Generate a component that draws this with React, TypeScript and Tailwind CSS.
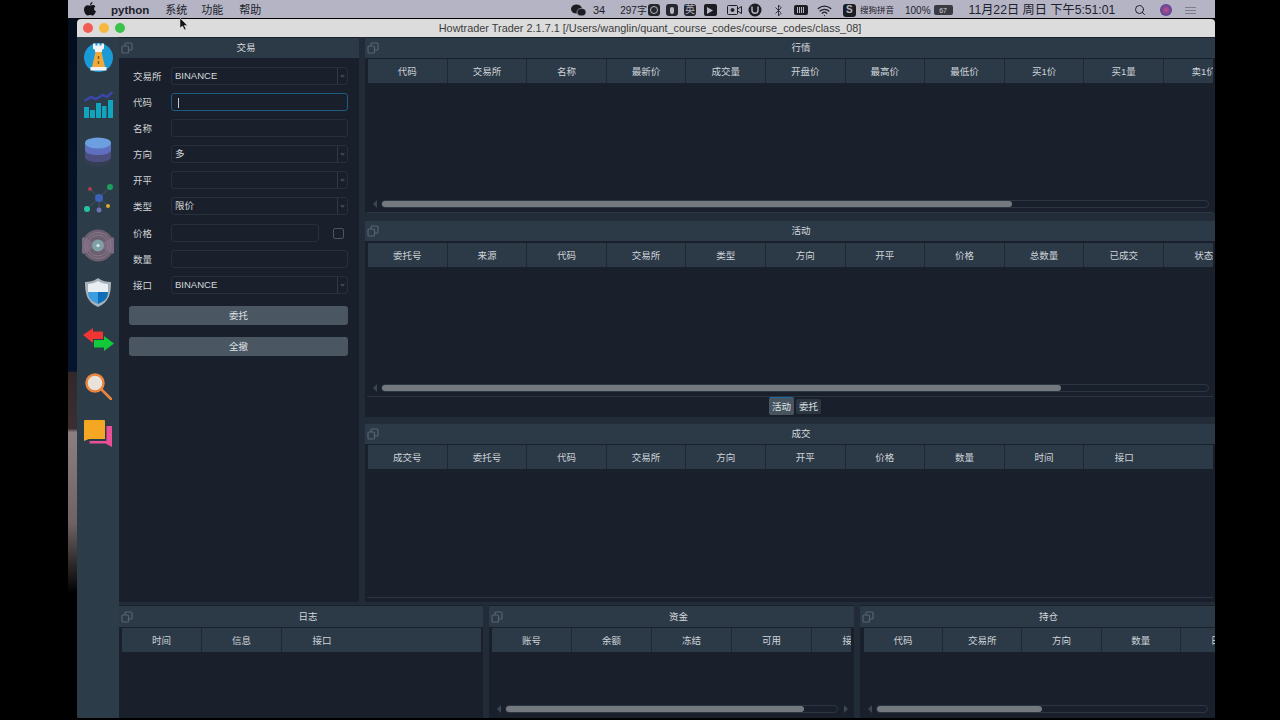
import { Search, Wifi, Bluetooth } from "lucide-react"

const font = "font-['Liberation_Sans','Noto_Sans_CJK_SC',sans-serif]"

const marketCols = ["代码", "交易所", "名称", "最新价", "成交量", "开盘价", "最高价", "最低价", "买1价", "买1量", "卖1价"]
const activeCols = ["委托号", "来源", "代码", "交易所", "类型", "方向", "开平", "价格", "总数量", "已成交", "状态"]
const tradeCols = ["成交号", "委托号", "代码", "交易所", "方向", "开平", "价格", "数量", "时间", "接口"]

function FloatIcon() {
  return (
    <svg width="12" height="12" viewBox="0 0 12 12" fill="none" stroke="#56626e" strokeWidth="1.2" className="shrink-0">
      <rect x="4" y="1" width="7" height="7" rx="1" />
      <rect x="1" y="4" width="6.5" height="7" rx="1" fill="#2c3a48" />
    </svg>
  )
}

function TitleBar({ title, h = "h-[20px]", offset = "" }: { title: string; h?: string; offset?: string }) {
  return (
    <div className={`${h} bg-[#2c3a48] flex items-center relative shrink-0`}>
      <div className="pl-[2px] flex items-center"><FloatIcon /></div>
      <div className={`flex-1 text-center text-[9.5px] text-[#d5d9dd] ${offset}`}>{title}</div>
    </div>
  )
}

function HeaderRow({ cols, w = 79.6 }: { cols: string[]; w?: number }) {
  return (
    <div className="h-[24px] bg-[#2c3a48] flex shrink-0 overflow-hidden">
      {cols.map((c) => (
        <div
          key={c}
          style={{ width: w, minWidth: w }}
          className="h-full pt-[2px] flex items-center justify-center text-[9.5px] text-[#cfd4d9] border-r border-[#1e2833] last:border-r-0 whitespace-nowrap"
        >
          {c}
        </div>
      ))}
    </div>
  )
}

function Scrollbar({ thumb, track, arrow = false }: { thumb: number; track: number; arrow?: boolean }) {
  return (
    <div className="h-[12px] flex items-center shrink-0 pl-[5px]">
      <svg width="6" height="8" viewBox="0 0 6 8" className="shrink-0"><path d="M5 0 L1 4 L5 8 Z" fill="#3a4653" /></svg>
      <div style={{ width: track }} className="ml-[3px] h-[8px] rounded-[4px] border border-[#2b3642] shrink-0">
        <div style={{ width: thumb }} className="h-full rounded-[4px] bg-[#74787f]" />
      </div>
      {arrow && <svg width="6" height="8" viewBox="0 0 6 8" className="ml-[5px] shrink-0"><path d="M1 0 L5 4 L1 8 Z" fill="#3a4653" /></svg>}
    </div>
  )
}

function TablePanel({ title, cols, thumb, track, height = "h-[175px]", gap = "mt-[1px]" }: { title: string; cols: string[]; thumb?: number; track?: number; height?: string; gap?: string }) {
  return (
    <div className={`${height} flex flex-col shrink-0`}>
      <TitleBar title={title} offset="pl-[8px]" />
      <div className={`flex-1 flex flex-col ${gap} mx-[2px] border-b border-[#2b3642] overflow-hidden`}>
        <div className="pl-[1px]"><HeaderRow cols={cols} /></div>
        <div className="flex-1" />
        {thumb && track && <div className="pb-[2px]"><Scrollbar thumb={thumb} track={track} /></div>}
      </div>
    </div>
  )
}

function Box({ children, combo = false, w = "w-[177px]", focus = false }: { children?: React.ReactNode; combo?: boolean; w?: string; focus?: boolean }) {
  return (
    <div className={`${w} h-[18px] rounded-[3px] border ${focus ? "border-[#1f5a80]" : "border-[#262f3a]"} bg-[#19202b] flex items-center text-[9.5px] text-[#d5d9dd] pl-[3px] relative`}>
      <span className="flex-1 pt-[1px]">{children}</span>
      {combo && (
        <div className="w-[10px] h-full border-l border-[#2f3a46] flex items-center justify-center">
          <svg width="5" height="3" viewBox="0 0 5 3"><path d="M0 0 L5 0 L2.5 3 Z" fill="#3d4955" /></svg>
        </div>
      )}
    </div>
  )
}

function FormRow({ label, children, h = "h-[26px]" }: { label: string; children: React.ReactNode; h?: string }) {
  return (
    <div className={`${h} flex items-center`}>
      <div className="w-[38px] pt-[2px] text-[9.5px] text-[#d0d4d8] whitespace-nowrap">{label}</div>
      {children}
    </div>
  )
}

function ActionButton({ label }: { label: string }) {
  return (
    <button className="h-[19px] w-[219px] pt-[1px] rounded-[3px] bg-[#4a5763] text-[9.5px] text-[#dfe3e6] flex items-center justify-center">
      {label}
    </button>
  )
}

function SideIcons() {
  return (
    <div className="w-[42px] shrink-0 bg-[#2d3c49] flex flex-col items-center pt-[6px] rounded-bl-[4px]">
      <svg width="29" height="29" viewBox="0 0 29 29" className="mb-[19px] shrink-0">
        <circle cx="14.5" cy="14.5" r="14.5" fill="#1a9ad6" />
        <path d="M9 0.5 h2.5 v2 h2 v-2 h2 v2 h2 v-2 h2.5 v5 l-2 1.5 v2 h-7 v-2 l-2 -1.5 Z" fill="#f3f4f6" />
        <path d="M11.5 9 h6 l3.5 15 h-13 Z" fill="#f2a93a" />
        <path d="M13.8 13 h1.4 v3 h-1.4 Z M13.8 18 h1.4 v3 h-1.4 Z" fill="#7a5a1a" />
        <rect x="6.5" y="24" width="16" height="3.5" fill="#f3f4f6" />
      </svg>
      <svg width="29" height="27" viewBox="0 0 29 27" className="mb-[19px] shrink-0">
        <path d="M0.5 10 L7 6 L12 8 L19 4 L23 6 L28.5 1" fill="none" stroke="#3b46a8" strokeWidth="2.5" />
        <rect x="0" y="16" width="5" height="11" fill="#11a5bd" />
        <rect x="6" y="19" width="5" height="8" fill="#11a5bd" />
        <rect x="12" y="12" width="5" height="15" fill="#11a5bd" />
        <rect x="18" y="15" width="4.5" height="12" fill="#11a5bd" />
        <rect x="24" y="9" width="5" height="18" fill="#11a5bd" />
      </svg>
      <svg width="28" height="30" viewBox="0 0 28 30" className="mb-[17px] shrink-0">
        <path d="M1 20 v4 c0 3 6 5.5 13 5.5 s13 -2.5 13 -5.5 v-4 Z" fill="#353d52" />
        <path d="M1 13 v7 c0 3 6 5 13 5 s13 -2 13 -5 v-7 Z" fill="#4b5080" />
        <path d="M1 6 v7 c0 3 6 5 13 5 s13 -2 13 -5 v-7 Z" fill="#5f6fc0" />
        <ellipse cx="14" cy="6" rx="13" ry="5.5" fill="#6b9fe0" />
      </svg>
      <svg width="29" height="29" viewBox="0 0 29 29" className="mb-[16px] shrink-0">
        <g stroke="#46586c" strokeWidth="0.8">
          <path d="M15 14 L6 5 M15 14 L26 3 M15 14 L3 25 M15 14 L15 26 M15 14 L24 22" />
        </g>
        <circle cx="6" cy="5" r="2" fill="#b03a4e" />
        <circle cx="26" cy="3" r="3" fill="#1c9e5c" />
        <circle cx="15" cy="14" r="4" fill="#3a62b8" />
        <circle cx="3" cy="25" r="3" fill="#24c6a0" />
        <circle cx="15" cy="26" r="2.5" fill="#6a74b4" />
        <circle cx="24" cy="22" r="2" fill="#d8a92a" />
      </svg>
      <svg width="32" height="33" viewBox="0 0 32 33" className="mb-[16px] shrink-0">
        <circle cx="16" cy="16.5" r="16" fill="#6d5f70" />
        <path d="M16 16.5 L31 8 A16 16 0 0 1 31 25 Z" fill="#7d6a80" />
        <path d="M16 16.5 L1 8 A16 16 0 0 0 1 25 Z" fill="#7d6a80" />
        <circle cx="16" cy="16.5" r="13" fill="none" stroke="#8d7d90" strokeWidth="0.8" />
        <circle cx="16" cy="16.5" r="10.5" fill="none" stroke="#8d7d90" strokeWidth="0.8" />
        <circle cx="16" cy="16.5" r="6" fill="#7fa0a8" />
        <circle cx="16" cy="16.5" r="1.6" fill="#dfe7ea" />
      </svg>
      <svg width="26" height="29" viewBox="0 0 26 29" className="mb-[21px] shrink-0">
        <path d="M13 0 C17 3 22 4 26 4 C26 16 24 24 13 29 C2 24 0 16 0 4 C4 4 9 3 13 0 Z" fill="#a9b1b8" />
        <path d="M13 3 C16 5 20 6 23 6 V14 H3 V6 C6 6 10 5 13 3 Z" fill="#e8eef2" />
        <path d="M3 14 H13 V26 C6 23 3 20 3 14 Z" fill="#3b9ee0" />
        <path d="M13 14 H23 C23 20 20 23 13 26 Z" fill="#0e6fb8" />
      </svg>
      <svg width="31" height="23" viewBox="0 0 31 23" className="mb-[22px] shrink-0">
        <path d="M0 7 L10 0 V3.5 H20 V11 H10 V15 Z" fill="#f03535" />
        <path d="M31 15.5 L21 23 V19.5 H11 V12 H21 V8 Z" fill="#12c93a" />
      </svg>
      <svg width="27" height="27" viewBox="0 0 27 27" className="mb-[20px] shrink-0">
        <path d="M15.5 15.5 L26 26" stroke="#e9853f" strokeWidth="2.6" strokeLinecap="round" />
        <circle cx="10" cy="10" r="8.5" fill="#e8e2da" stroke="#e9853f" strokeWidth="2.5" />
      </svg>
      <svg width="28" height="27" viewBox="0 0 28 27" className="shrink-0">
        <path d="M22.5 6 H28 V27 L21.5 23.5 H5.5 V21 H22.5 Z" fill="#ec4f97" />
        <path d="M0 1 C0 0.5 0.5 0 1 0 H20 C20.5 0 21 0.5 21 1 V19 H5 L0 21 Z" fill="#f5a623" />
      </svg>
    </div>
  )
}

function MenuBar() {
  return (
    <div className="h-[18px] pt-[3px] bg-[#b4b4c4] flex items-center text-[#20222a] shrink-0 relative">
      <svg width="12" height="14" viewBox="0 0 12 14" className="ml-[16px] -mt-[3px]">
        <path d="M8.5 0 C8.6 1.5 7.4 3 6 3 C5.9 1.6 7.1 0.2 8.5 0 Z M6.1 3.6 C7 3.6 7.8 3 8.8 3 C9.8 3 10.8 3.5 11.4 4.4 C9.4 5.6 9.8 8.4 12 9.2 C11.3 11 10 13.6 8.6 13.6 C7.6 13.6 7.3 13 6.1 13 C4.9 13 4.6 13.6 3.6 13.6 C2 13.6 0 10.4 0 7.6 C0 5 1.7 3.2 3.6 3.2 C4.6 3.2 5.3 3.6 6.1 3.6 Z" fill="#15161a" />
      </svg>
      <span className="ml-[15px] text-[11.5px] font-bold">python</span>
      <span className="ml-[16px] text-[11px]">系统</span>
      <span className="ml-[14px] text-[11px]">功能</span>
      <span className="ml-[16px] text-[11px]">帮助</span>

      <div className="absolute left-[503px] top-[1px] h-full flex items-center text-[11px]">
        <svg width="15" height="13" viewBox="0 0 15 13" className="shrink-0">
          <ellipse cx="5.5" cy="5" rx="5.5" ry="4.6" fill="#1c1d22" />
          <ellipse cx="10.5" cy="8.2" rx="4.5" ry="3.7" fill="#1c1d22" stroke="#b4b4c4" strokeWidth="0.7" />
        </svg>
        <span className="ml-[7px]">34</span>
        <span className="ml-[15px] text-[10px] whitespace-nowrap">297字</span>
        <div className="ml-[1px] w-[12px] h-[12px] rounded-[3px] bg-[#26272c] flex items-center justify-center shrink-0"><div className="w-[8px] h-[8px] rounded-full border border-[#b4b4c4]" /></div>
        <div className="ml-[6px] w-[12px] h-[12px] rounded-[3px] bg-[#26272c] flex items-center justify-center shrink-0"><div className="w-[4px] h-[7px] rounded-[2px] bg-[#b4b4c4]" /></div>
        <div className="ml-[6px] w-[12px] h-[12px] rounded-[3px] bg-[#26272c] flex items-center justify-center text-[10px] text-[#b4b4c4] leading-none shrink-0">英</div>
        <div className="ml-[8px] w-[13px] h-[12px] rounded-[2px] bg-[#1c1d22] flex items-center justify-center shrink-0">
          <svg width="6" height="7" viewBox="0 0 6 7"><path d="M0 0 L6 3.5 L0 7 Z" fill="#b4b4c4" /></svg>
        </div>
        <svg width="15" height="12" viewBox="0 0 15 12" className="ml-[10px] shrink-0" fill="none" stroke="#1c1d22">
          <rect x="0.5" y="1.5" width="10" height="9" rx="1" />
          <path d="M10.5 5 L14.5 2.5 V9.5 L10.5 7" />
          <circle cx="5.5" cy="6" r="1.5" fill="#1c1d22" />
        </svg>
        <svg width="14" height="14" viewBox="0 0 14 14" className="ml-[6px] shrink-0">
          <circle cx="7" cy="7" r="6.5" fill="#1c1d22" />
          <path d="M4 3.5 V7.5 C4 11 10 11 10 7.5 V3.5" fill="none" stroke="#b4b4c4" strokeWidth="1.5" />
        </svg>
        <Bluetooth size={13} className="ml-[10px] shrink-0" strokeWidth={1.6} />
        <div className="ml-[9px] w-[14px] h-[10px] rounded-[2px] bg-[#1c1d22] flex items-center justify-center gap-[1px] shrink-0">
          <div className="w-[1px] h-[6px] bg-[#b4b4c4]" /><div className="w-[1px] h-[6px] bg-[#b4b4c4]" /><div className="w-[1px] h-[6px] bg-[#b4b4c4]" /><div className="w-[1px] h-[6px] bg-[#b4b4c4]" />
        </div>
        <Wifi size={15} className="ml-[9px] shrink-0" strokeWidth={2} />
        <div className="ml-[11px] w-[13px] h-[13px] rounded-[3px] bg-[#1c1d22] flex items-center justify-center text-[10px] font-bold text-[#b4b4c4] leading-none shrink-0">S</div>
        <span className="ml-[4px] text-[8.5px] whitespace-nowrap">搜狗拼音</span>
        <span className="ml-[11px] text-[10px]">100%</span>
        <div className="ml-[3px] w-[19px] h-[10px] rounded-[2px] bg-[#3a3b42] flex items-center justify-center text-[7px] text-[#d5d5df] leading-none shrink-0">67</div>
        <span className="ml-[16px] text-[12.2px] whitespace-nowrap">11月22日 周日 下午5:51:01</span>
        <Search size={12} className="ml-[19px] shrink-0" strokeWidth={2} />
        <div className="ml-[14px] w-[12px] h-[12px] rounded-full bg-[radial-gradient(circle,#c0508c,#2a3f9a)] shrink-0" />
        <div className="ml-[13px] flex flex-col gap-[2px] shrink-0">
          <div className="w-[11px] h-[1px] bg-[#7c7c8a]" /><div className="w-[11px] h-[1px] bg-[#7c7c8a]" /><div className="w-[11px] h-[1px] bg-[#7c7c8a]" />
        </div>
      </div>

      {/* 鼠标 */}
      <svg width="9" height="13" viewBox="0 0 9 13" className="absolute left-[112px] top-[18px] z-10">
        <path d="M0 0 V10 L2.5 8 L4.5 12 L6 11 L4.2 7.4 H7.5 Z" fill="#111" stroke="#eee" strokeWidth="0.5" />
      </svg>
    </div>
  )
}

export default function App() {
  return (
    <div className={`w-[1280px] h-[720px] bg-black overflow-hidden flex ${font}`}>
      <div className="w-[68px] shrink-0" />
      <div className="w-[1147px] shrink-0 flex flex-col">
        <MenuBar />
        <div className="flex-1 flex min-h-0">
          <div className="w-[9px] shrink-0 bg-[linear-gradient(to_bottom,#040d1c_0%,#05152e_50.3%,#332829_50.5%,#3a2e32_58.5%,#8d7f80_59%,#6e6263_72%,#000_82%)]" />
          <div className="flex-1 flex flex-col pt-[1px] pb-[2px] bg-black min-w-0">
            <div className="h-[18px] shrink-0 bg-[#dcdcdc] rounded-t-[4px] flex items-center relative">
              <div className="pl-[6px] flex gap-[6px]">
                <div className="w-[10px] h-[10px] rounded-full bg-[#f25c54]" />
                <div className="w-[10px] h-[10px] rounded-full bg-[#f5b83d]" />
                <div className="w-[10px] h-[10px] rounded-full bg-[#3bc24a]" />
              </div>
              <div className="absolute inset-0 flex items-center justify-center text-[10.9px] text-[#3c3c3c] pl-[8px]">
                Howtrader Trader 2.1.7.1 [/Users/wanglin/quant_course_codes/course_codes/class_08]
              </div>
            </div>
            <div className="flex-1 flex min-h-0 bg-[#26323e]">
              <SideIcons />
              <div className="flex-1 flex flex-col min-w-0">
                <div className="h-[565px] flex shrink-0">
                  {/* 交易 */}
                  <div className="w-[240px] shrink-0 flex flex-col bg-[#19202b]">
                    <TitleBar title="交易" h="h-[20px] mt-[1px]" />
                    <div className="flex flex-col pl-[14px] pt-[5px]">
                      <FormRow label="交易所"><Box combo>BINANCE</Box></FormRow>
                      <FormRow label="代码"><Box focus><span className="inline-block ml-[3px] w-[1px] h-[10px] bg-[#c8ccd0] align-middle" /></Box></FormRow>
                      <FormRow label="名称"><Box /></FormRow>
                      <FormRow label="方向"><Box combo>多</Box></FormRow>
                      <FormRow label="开平"><Box combo /></FormRow>
                      <FormRow label="类型"><Box combo>限价</Box></FormRow>
                      <div className="pt-[1px]">
                        <FormRow label="价格">
                          <Box w="w-[148px]" />
                          <div className="ml-[14px] w-[11px] h-[11px] rounded-[2px] border border-[#4a5561]" />
                        </FormRow>
                      </div>
                      <FormRow label="数量"><Box /></FormRow>
                      <FormRow label="接口"><Box combo>BINANCE</Box></FormRow>
                    </div>
                    <div className="flex flex-col gap-[12px] pl-[10px] pt-[8px]">
                      <ActionButton label="委托" />
                      <ActionButton label="全撤" />
                    </div>
                  </div>
                  <div className="w-[6px] shrink-0 bg-[#222c38]" />
                  {/* 右侧 */}
                  <div className="flex-1 min-w-0 bg-[#19202b] flex flex-col pt-[1px] overflow-hidden">
                    <TablePanel title="行情" cols={marketCols} thumb={630} track={828} />
                    <div className="h-[8px] shrink-0 bg-[#222c38]" />
                    <TablePanel title="活动" cols={activeCols} thumb={679} track={828} height="h-[176px]" gap="mt-[2px]" />
                    <div className="h-[20px] shrink-0 flex items-start pl-[404px] gap-[2px]">
                      <div className="w-[25px] h-[18px] pt-[2px] bg-[#47535f] border-t border-[#1f6da0] rounded-[2px] text-[9.5px] text-[#dfe3e6] flex items-center justify-center">活动</div>
                      <div className="w-[25px] h-[15px] mt-[2px] pt-[1px] bg-[#2c3642] rounded-[2px] text-[9.5px] text-[#dfe3e6] flex items-center justify-center">委托</div>
                    </div>
                    <div className="h-[7px] shrink-0 bg-[#222c38]" />
                    <TablePanel title="成交" cols={tradeCols} height="h-[174px]" />
                  </div>
                </div>
                <div className="h-[3px] shrink-0 bg-[#222c38]" />
                {/* 底部 */}
                <div className="flex-1 flex min-h-0 bg-[#19202b]">
                  <div className="w-[364px] shrink-0 flex flex-col overflow-hidden">
                    <TitleBar title="日志" h="h-[21px] mt-[1px] pt-[1px]" />
                    <div className="mt-[1px] ml-[3px] mr-[2px]"><HeaderRow cols={["时间", "信息", "接口"]} w={80} /></div>
                  </div>
                  <div className="w-[6px] shrink-0 bg-[#222c38]" />
                  <div className="w-[365px] shrink-0 flex flex-col overflow-hidden">
                    <TitleBar title="资金" h="h-[21px] mt-[1px] pt-[1px]" />
                    <div className="mt-[1px] ml-[3px] mr-[3px] overflow-hidden"><HeaderRow cols={["账号", "余额", "冻结", "可用", "接口"]} w={80} /></div>
                    <div className="flex-1" />
                    <div className="pb-[3px] pl-[2px]"><Scrollbar thumb={298} track={333} arrow /></div>
                  </div>
                  <div className="w-[6px] shrink-0 bg-[#222c38]" />
                  <div className="flex-1 min-w-0 flex flex-col overflow-hidden">
                    <TitleBar title="持仓" h="h-[21px] mt-[1px] pt-[1px]" offset="pl-[8px]" />
                    <div className="mt-[1px] ml-[4px] overflow-hidden"><HeaderRow cols={["代码", "交易所", "方向", "数量", "日期"]} w={79.2} /></div>
                    <div className="flex-1" />
                    <div className="pb-[3px] pl-[2px]"><Scrollbar thumb={165} track={332} /></div>
                  </div>
                </div>
              </div>
            </div>
          </div>
        </div>
      </div>
    </div>
  )
}
